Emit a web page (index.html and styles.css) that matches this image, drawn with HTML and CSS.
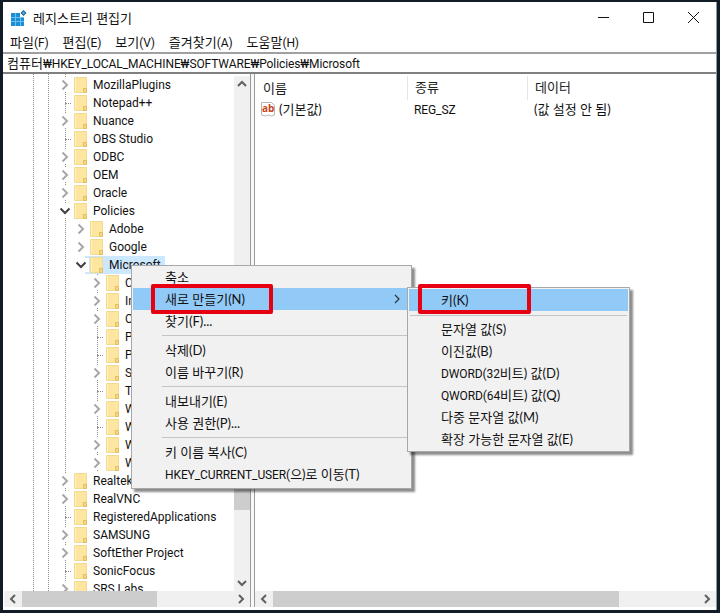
FILE: index.html
```html
<!DOCTYPE html>
<html lang="ko">
<head>
<meta charset="utf-8">
<title>레지스트리 편집기</title>
<link rel="stylesheet" href="styles.css">
</head>
<body>
<svg class="defs" width="0" height="0" aria-hidden="true">
  <symbol id="folder" viewBox="0 0 14 16">
    <path d="M.5.5h12v15H.5z" fill="#fde7a0" stroke="#f3d98f"/>
    <path d="M9.5 15.5v-4h3v4z" fill="#f7d87f" stroke="#e3bd5f"/>
    <path d="M1 1h1v14H1z" fill="#fff0bd"/>
  </symbol>
  <symbol id="closed" viewBox="0 0 12 12"><path d="M3.5 1.5 8 6l-4.5 4.5" fill="none" stroke="#a8a8a8" stroke-width="2"/></symbol>
  <symbol id="open" viewBox="0 0 12 12"><path d="M1.5 3.5 6 8l4.5-4.5" fill="none" stroke="#404040" stroke-width="2"/></symbol>
  <symbol id="sb" viewBox="0 0 10 10"><path d="M3 1 7 5 3 9" fill="none" stroke="#606060" stroke-width="2"/></symbol>
</svg>
<div class="window">
  <header class="titlebar">
    <svg class="appicon" viewBox="0 0 16 16" width="16" height="16">
      <path fill="#1b8ed6" d="M0 3h9v4h4v9H0z"/>
      <path fill="#6cc0ee" d="M4 3h1v13H4zM9 7h1v9H9zM0 7h13v1H0zM0 11h13v1H0z"/>
      <path fill="#17638f" d="M12.5 0 15.5 3 12.5 6 9.5 3z"/>
      <path fill="#5bb4e8" d="M12.5 1.5 14 3l-1.5 1.5L11 3z"/>
    </svg>
    <span class="apptitle">레지스트리 편집기</span>
    <div class="controls">
      <svg class="ctl" viewBox="0 0 11 11" width="11" height="11"><path d="M0 5.5h11" stroke="#111" fill="none"/></svg>
      <svg class="ctl" viewBox="0 0 11 11" width="11" height="11"><path d="M.5.5h10v10H.5z" stroke="#111" fill="none"/></svg>
      <svg class="ctl" viewBox="0 0 11 11" width="11" height="11"><path d="M0 0l11 11M11 0 0 11" stroke="#111" fill="none"/></svg>
    </div>
  </header>
  <nav class="menubar">
    <span>파일<b class="en">(F)</b></span><span>편집<b class="en">(E)</b></span><span>보기<b class="en">(V)</b></span><span>즐겨찾기<b class="en">(A)</b></span><span>도움말<b class="en">(H)</b></span>
  </nav>
  <div class="address">컴퓨터<b class="en">₩HKEY_LOCAL_MACHINE₩SOFTWARE₩Policies₩Microsoft</b></div>
  <main class="panes">
    <section class="treepane">
      <div class="treewrap">
        <div class="tree">
          <div class="row l1"><i class="exp"><svg><use href="#closed"/></svg></i><svg class="fld"><use href="#folder"/></svg><span>MozillaPlugins</span></div>
          <div class="row l1"><i class="leaf"></i><svg class="fld"><use href="#folder"/></svg><span>Notepad++</span></div>
          <div class="row l1"><i class="exp"><svg><use href="#closed"/></svg></i><svg class="fld"><use href="#folder"/></svg><span>Nuance</span></div>
          <div class="row l1"><i class="leaf"></i><svg class="fld"><use href="#folder"/></svg><span>OBS Studio</span></div>
          <div class="row l1"><i class="exp"><svg><use href="#closed"/></svg></i><svg class="fld"><use href="#folder"/></svg><span>ODBC</span></div>
          <div class="row l1"><i class="exp"><svg><use href="#closed"/></svg></i><svg class="fld"><use href="#folder"/></svg><span>OEM</span></div>
          <div class="row l1"><i class="exp"><svg><use href="#closed"/></svg></i><svg class="fld"><use href="#folder"/></svg><span>Oracle</span></div>
          <div class="row l1"><i class="exp"><svg><use href="#open"/></svg></i><svg class="fld"><use href="#folder"/></svg><span>Policies</span></div>
          <div class="row l2"><i class="exp"><svg><use href="#closed"/></svg></i><svg class="fld"><use href="#folder"/></svg><span>Adobe</span></div>
          <div class="row l2"><i class="exp"><svg><use href="#closed"/></svg></i><svg class="fld"><use href="#folder"/></svg><span>Google</span></div>
          <div class="row l2"><i class="exp"><svg><use href="#open"/></svg></i><div class="selected"><svg class="fld"><use href="#folder"/></svg><span>Microsoft</span></div></div>
          <div class="row l3"><i class="exp"><svg><use href="#closed"/></svg></i><svg class="fld"><use href="#folder"/></svg><span>Cryptography</span></div>
          <div class="row l3"><i class="exp"><svg><use href="#closed"/></svg></i><svg class="fld"><use href="#folder"/></svg><span>Internet Explorer</span></div>
          <div class="row l3"><i class="exp"><svg><use href="#closed"/></svg></i><svg class="fld"><use href="#folder"/></svg><span>Office</span></div>
          <div class="row l3"><i class="leaf"></i><svg class="fld"><use href="#folder"/></svg><span>PeerDist</span></div>
          <div class="row l3"><i class="leaf"></i><svg class="fld"><use href="#folder"/></svg><span>Peernet</span></div>
          <div class="row l3"><i class="exp"><svg><use href="#closed"/></svg></i><svg class="fld"><use href="#folder"/></svg><span>SystemCertificates</span></div>
          <div class="row l3"><i class="leaf"></i><svg class="fld"><use href="#folder"/></svg><span>TPM</span></div>
          <div class="row l3"><i class="exp"><svg><use href="#closed"/></svg></i><svg class="fld"><use href="#folder"/></svg><span>Windows</span></div>
          <div class="row l3"><i class="leaf"></i><svg class="fld"><use href="#folder"/></svg><span>Windows Defender</span></div>
          <div class="row l3"><i class="exp"><svg><use href="#closed"/></svg></i><svg class="fld"><use href="#folder"/></svg><span>Windows NT</span></div>
          <div class="row l3"><i class="exp"><svg><use href="#closed"/></svg></i><svg class="fld"><use href="#folder"/></svg><span>WindowsStore</span></div>
          <div class="row l1"><i class="exp"><svg><use href="#closed"/></svg></i><svg class="fld"><use href="#folder"/></svg><span>Realtek</span></div>
          <div class="row l1"><i class="exp"><svg><use href="#closed"/></svg></i><svg class="fld"><use href="#folder"/></svg><span>RealVNC</span></div>
          <div class="row l1"><i class="leaf"></i><svg class="fld"><use href="#folder"/></svg><span>RegisteredApplications</span></div>
          <div class="row l1"><i class="exp"><svg><use href="#closed"/></svg></i><svg class="fld"><use href="#folder"/></svg><span>SAMSUNG</span></div>
          <div class="row l1"><i class="exp"><svg><use href="#closed"/></svg></i><svg class="fld"><use href="#folder"/></svg><span>SoftEther Project</span></div>
          <div class="row l1"><i class="leaf"></i><svg class="fld"><use href="#folder"/></svg><span>SonicFocus</span></div>
          <div class="row l1"><i class="exp"><svg><use href="#closed"/></svg></i><svg class="fld"><use href="#folder"/></svg><span>SRS Labs</span></div>
        </div>
        <div class="vscroll">
          <svg class="vbtn up"><use href="#sb"/></svg>
          <div class="vthumb"></div>
          <svg class="vbtn down"><use href="#sb"/></svg>
        </div>
      </div>
      <div class="hscroll">
        <svg class="hbtn left"><use href="#sb"/></svg>
        <div class="hthumb tree-thumb"></div>
        <svg class="hbtn"><use href="#sb"/></svg>
      </div>
    </section>
    <div class="splitter"></div>
    <section class="listpane">
      <div class="list">
        <div class="lhead">
          <div class="cname">이름</div><div class="ctype">종류</div><div class="cdata">데이터</div>
        </div>
        <div class="lrow">
          <div class="cname">
            <svg class="abicon" viewBox="0 0 16 16" width="16" height="16">
              <path d="M1.5 1.5h10l3 3v9.5l-3 1-3-1-3 1-4-1z" fill="#fff" stroke="#b5b5b5"/>
              <text x="2" y="11" class="abtext">ab</text>
            </svg>
            <span>(기본값)</span>
          </div>
          <div class="ctype"><b class="en">REG_SZ</b></div>
          <div class="cdata">(값 설정 안 됨)</div>
        </div>
      </div>
      <div class="hscroll">
        <svg class="hbtn left"><use href="#sb"/></svg>
        <div class="hthumb list-thumb"></div>
        <svg class="hbtn"><use href="#sb"/></svg>
      </div>
    </section>
  </main>

  <div class="ctx ctx-main">
    <div class="mi">축소</div>
    <div class="mi hot">새로 만들기(N)<svg class="marrow" viewBox="0 0 6 10" width="6" height="10"><path d="M1 1l4 4-4 4" fill="none" stroke="#333" stroke-width="1.2"/></svg></div>
    <div class="mi">찾기(F)...</div>
    <div class="sep"></div>
    <div class="mi">삭제(D)</div>
    <div class="mi">이름 바꾸기(R)</div>
    <div class="sep"></div>
    <div class="mi">내보내기(E)</div>
    <div class="mi">사용 권한(P)...</div>
    <div class="sep"></div>
    <div class="mi">키 이름 복사(C)</div>
    <div class="mi"><b class="en">HKEY_CURRENT_USER(</b>으)로 이동(T)</div>
  </div>
  <div class="ctx ctx-sub">
    <div class="mi hot">키(K)</div>
    <div class="sep"></div>
    <div class="mi">문자열 값(S)</div>
    <div class="mi">이진값(B)</div>
    <div class="mi"><b class="en">DWORD(32</b>비트) 값(D)</div>
    <div class="mi"><b class="en">QWORD(64</b>비트) 값(Q)</div>
    <div class="mi">다중 문자열 값(M)</div>
    <div class="mi">확장 가능한 문자열 값(E)</div>
  </div>
  <div class="redbox red-main"></div>
  <div class="redbox red-sub"></div>
</div>
</body>
</html>
```
FILE: styles.css
```css
* { box-sizing: border-box; }
html, body { margin: 0; height: 100%; }
body {
  background: #111c27;
  overflow: hidden;
  font-family: Lato, "Noto Sans CJK KR", sans-serif;
  font-size: 13px;
  color: #111;
}
.en { font: 400 12px Roboto, "Noto Sans CJK KR", sans-serif; letter-spacing: -.1px; }
.defs { position: absolute; }
.window {
  position: relative;
  margin: 2px 3px 0;
  width: 714px;
  height: 608px;
  background: #fff;
  display: flex;
  flex-direction: column;
  padding-bottom: 3px;
  border-right: 1px solid #8a99a6;
}
.titlebar {
  height: 31px;
  flex: none;
  display: flex;
  align-items: center;
  padding-left: 8px;
}
.appicon { flex: none; margin-top: 1px; }
.apptitle { margin-left: 6px; }
.controls { margin-left: auto; display: flex; gap: 34px; padding-right: 17px; }
.ctl { display: block; }
.menubar {
  height: 19px;
  flex: none;
  display: flex;
  gap: 14px;
  padding-left: 7px;
  align-items: center;
  line-height: 19px;
}
.address {
  height: 22px;
  flex: none;
  border-top: 2px solid #a0a0a0;
  border-bottom: 2px solid #808080;
  padding-left: 4px;
  line-height: 18px;
  white-space: nowrap;
}
.panes { flex: 1; min-height: 0; display: flex; }
.treepane {
  width: 247px;
  flex: none;
  display: flex;
  flex-direction: column;
  padding-left: 1px;
}
.treewrap { flex: 1; min-height: 0; display: flex; }
.tree {
  flex: 1;
  min-width: 0;
  overflow: hidden;
  padding-top: 2px;
  background-image:
    linear-gradient(#8f8f8f 50%, transparent 50%),
    linear-gradient(#8f8f8f 50%, transparent 50%),
    linear-gradient(#8f8f8f 50%, transparent 50%);
  background-size: 1px 2px;
  background-repeat: repeat-y;
  background-position: 29px 0, 44px 0, 61px 0;
}
.row {
  height: 18px;
  display: flex;
  align-items: center;
  white-space: nowrap;
  font-family: Roboto, sans-serif;
  font-size: 12px;
  line-height: 18px;
}
.row.l1 { padding-left: 53px; }
.row.l2 { padding-left: 69px; }
.row.l3 {
  padding-left: 85px;
  background-image: linear-gradient(#8f8f8f 50%, transparent 50%);
  background-size: 1px 2px;
  background-repeat: repeat-y;
  background-position: 93px 0;
}
.exp, .leaf { width: 16px; height: 18px; flex: none; display: block; position: relative; }
.exp { height: 14px; background: #fff; padding: 1px 2px; }
.exp svg { width: 12px; height: 12px; display: block; }
.leaf::after {
  content: "";
  display: block;
  width: 6px;
  margin-left: 8px;
  padding-top: 9px;
  border-bottom: 1px dotted #8f8f8f;
}
.fld { width: 14px; height: 16px; flex: none; margin-right: 5px; display: block; margin-left: 1px; }
.selected {
  display: flex;
  align-items: center;
  height: 18px;
  background: #cce8ff;
  margin-left: -4px;
  padding: 0 4px 0 4px;
}
.vscroll {
  width: 16px;
  flex: none;
  background: #f0f0f0;
  margin-top: 2px;
  display: flex;
  flex-direction: column;
  align-items: center;
}
.vbtn { width: 10px; height: 10px; flex: none; margin: 3px 0; }
.vbtn.up { transform: rotate(-90deg); }
.vbtn.down { transform: rotate(90deg); margin-top: auto; margin-bottom: 3px; }
.vthumb { width: 16px; height: 210px; margin-top: 208px; background: #cdcdcd; flex: none; }
.hscroll {
  height: 16px;
  flex: none;
  background: #f0f0f0;
  display: flex;
  align-items: center;
  justify-content: space-between;
}
.hbtn { width: 10px; height: 10px; margin: 0 4px; flex: none; }
.hbtn.left { transform: scaleX(-1); }
.hthumb { height: 16px; background: #cdcdcd; flex: none; }
.tree-thumb { width: 135px; margin-right: auto; }
.list-thumb { width: 346px; margin-right: auto; }
.splitter {
  width: 5px;
  flex: none;
  background: #f8f8f8;
  border-left: 1px solid #9a9a9a;
  border-right: 1px solid #9a9a9a;
}
.listpane { flex: 1; min-width: 0; display: flex; flex-direction: column; }
.list { flex: 1; min-height: 0; }
.lhead { display: flex; height: 26px; padding-top: 2px; }
.lhead .cname, .lhead .ctype, .lhead .cdata { height: 24px; line-height: 22px; color: #222; }
.lhead .ctype, .lhead .cdata { border-left: 1px solid #e5e5e5; }
.cname { width: 152px; padding-left: 8px; flex: none; display: flex; align-items: center; }
.ctype { width: 120px; padding-left: 7px; flex: none; }
.cdata { flex: 1; padding-left: 7px; }
.lrow { display: flex; height: 18px; line-height: 18px; }
.lrow .cname { padding-left: 5px; }
.abicon { flex: none; margin-right: 3px; }
.abtext { font-size: 10px; font-weight: 700; fill: #c8451c; font-family: "Open Sans", sans-serif; }
.ctx {
  position: absolute;
  background: #f1f1f1;
  border: 1px solid #a8a8a8;
  box-shadow: 3px 3px 2px rgba(0, 0, 0, .45);
  z-index: 2;
}
.ctx-main { left: 128px; top: 263px; width: 281px; height: 224px; padding: 0 1px 1px; }
.ctx-sub { left: 404px; top: 285px; width: 223px; height: 165px; padding: 1px; z-index: 3; }
.mi {
  height: 22px;
  line-height: 22px;
  padding-left: 32px;
  position: relative;
  white-space: nowrap;
}
.hot { background: #91c9f7; }
.marrow { position: absolute; right: 10px; top: 6px; }
.sep { height: 1px; background: #c4c4c4; margin: 3px 1px 3px 29px; }
.ctx-sub .sep { margin: 4px 1px 2px 1px; }
.redbox {
  position: absolute;
  border: 4px solid #e60012;
  border-radius: 2px;
  z-index: 4;
}
.red-main { left: 148px; top: 282px; width: 122px; height: 30px; }
.red-sub { left: 415px; top: 282px; width: 113px; height: 30px; }
```
